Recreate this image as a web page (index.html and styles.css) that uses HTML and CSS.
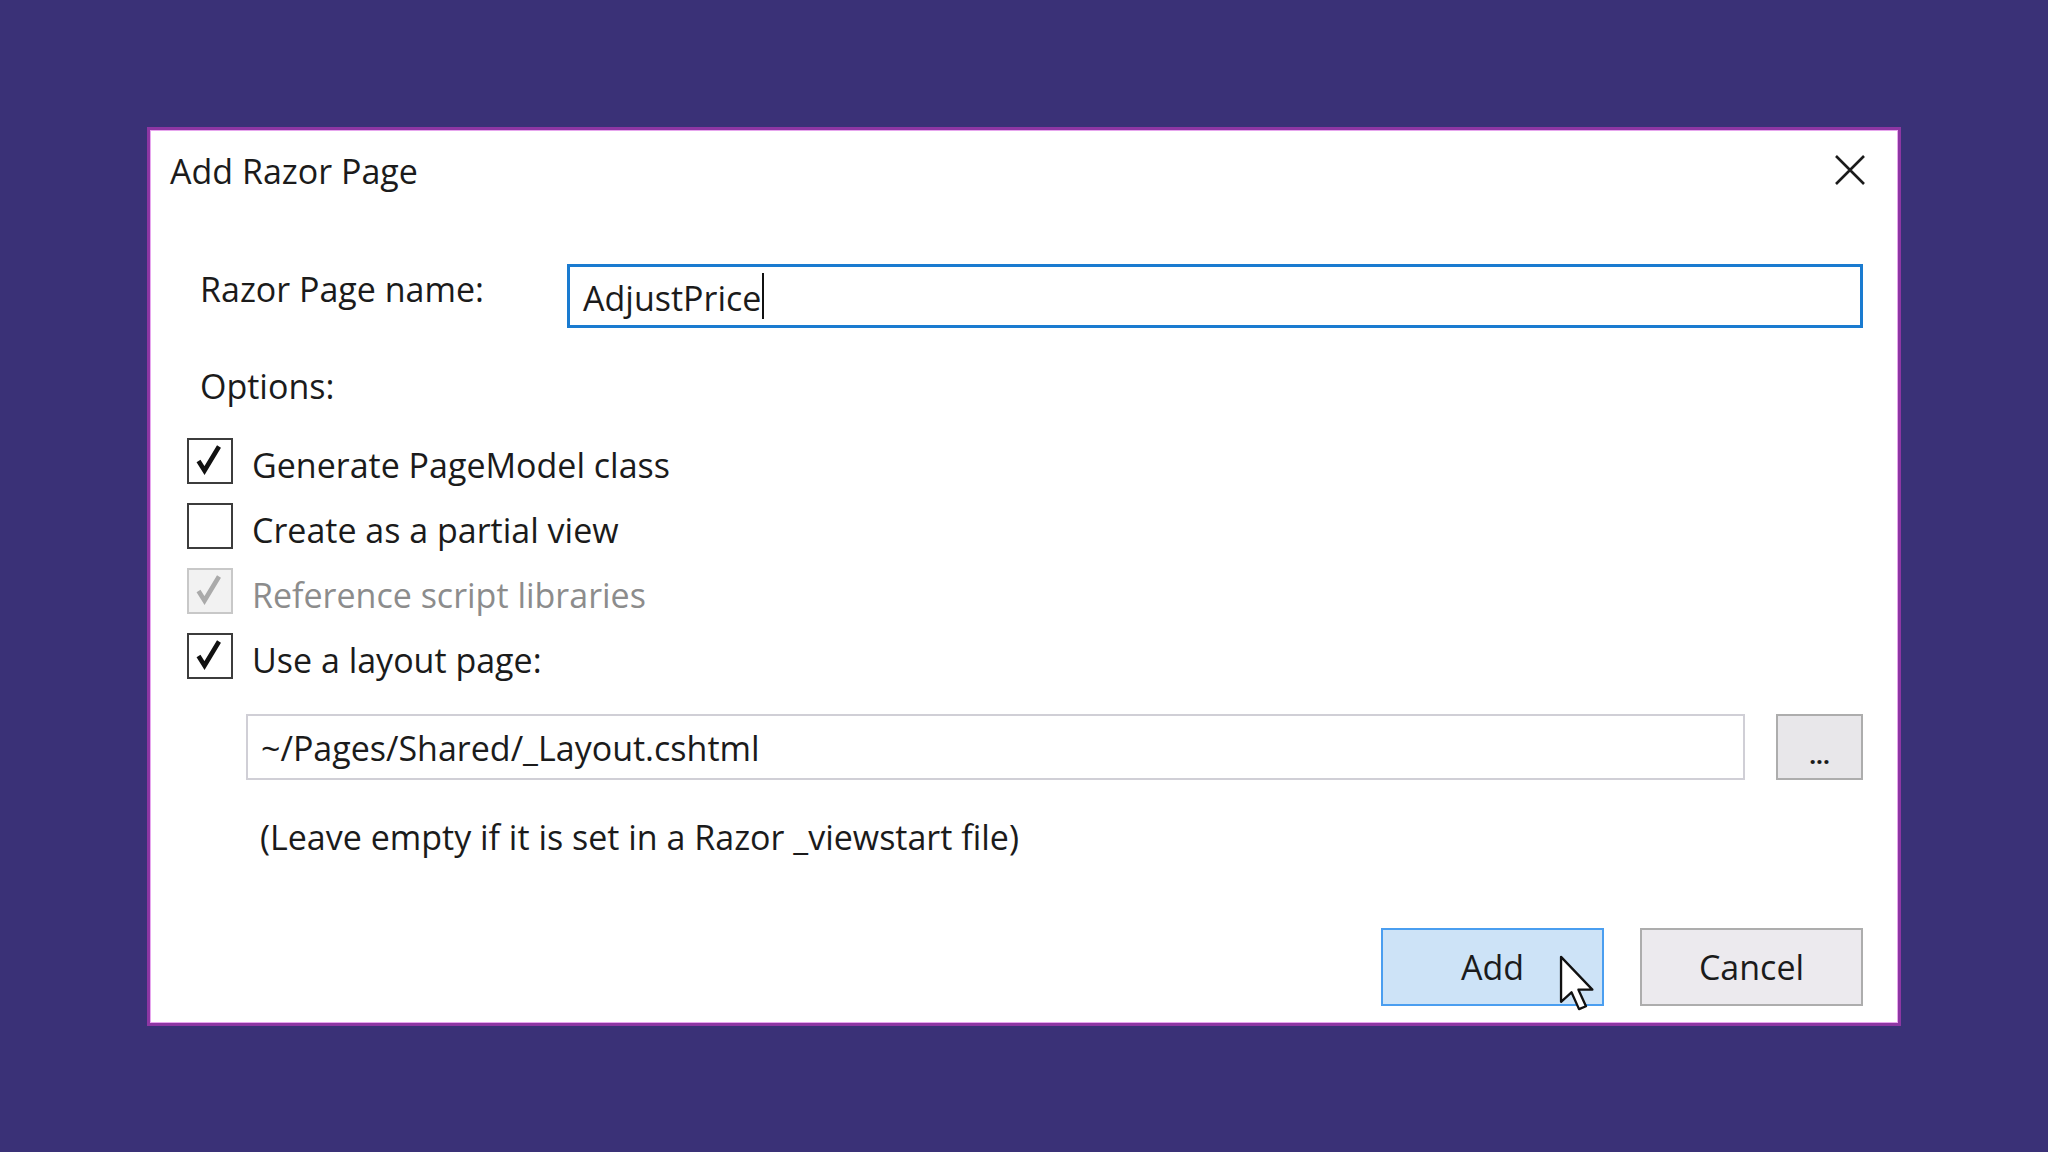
FILE: index.html
```html
<!DOCTYPE html>
<html lang="en">
<head>
    <meta charset="UTF-8">
    <title>Add Razor Page</title>
    <link rel="stylesheet" href="styles.css">
</head>
<body>
    <div class="dialog">
        <div class="titlebar">
            <span class="title">Add Razor Page</span>
            <button class="close" aria-label="Close">
                <svg width="30" height="30" viewBox="0 0 30 30"><path d="M1 1 L29 29 M29 1 L1 29" stroke="#1b1b1b" stroke-width="2.6" fill="none"/></svg>
            </button>
        </div>

        <div class="content">
            <div class="name-row">
                <label class="name-label">Razor Page name:</label>
                <div class="textbox focused"><span>AdjustPrice</span><span class="caret"></span></div>
            </div>

            <div class="options-label">Options:</div>

            <div class="checks">
                <div class="check-row">
                    <span class="box"><svg width="42" height="42" viewBox="0 0 42 42"><path d="M9.5 21 L15.5 30.5 L30 6.5" stroke="#111" stroke-width="4.6" fill="none"/></svg></span>
                    <span class="check-text">Generate PageModel class</span>
                </div>
                <div class="check-row">
                    <span class="box"></span>
                    <span class="check-text">Create as a partial view</span>
                </div>
                <div class="check-row disabled">
                    <span class="box"><svg width="42" height="42" viewBox="0 0 42 42"><path d="M9.5 21 L15.5 30.5 L30 6.5" stroke="#aaa" stroke-width="4.6" fill="none"/></svg></span>
                    <span class="check-text">Reference script libraries</span>
                </div>
                <div class="check-row">
                    <span class="box"><svg width="42" height="42" viewBox="0 0 42 42"><path d="M9.5 21 L15.5 30.5 L30 6.5" stroke="#111" stroke-width="4.6" fill="none"/></svg></span>
                    <span class="check-text">Use a layout page:</span>
                </div>
            </div>

            <div class="layout-row">
                <div class="textbox layout">~/Pages/Shared/_Layout.cshtml</div>
                <button class="browse">...</button>
            </div>

            <div class="hint">(Leave empty if it is set in a Razor _viewstart file)</div>

            <div class="actions">
                <button class="btn primary">Add
                    <svg class="cursor" width="38" height="58" viewBox="0 0 13 20"><path d="M1 1 V16.5 L4.6 13.2 L7.2 19 L9.6 18 L7 12.3 H11.8 Z" fill="#fff" stroke="#111" stroke-width="0.8" stroke-linejoin="round"/></svg>
                </button>
                <button class="btn">Cancel</button>
            </div>
        </div>
    </div>
</body>
</html>
```

FILE: styles.css
```css
body {
    margin: 0;
    padding: 127px 0 0 147px;
    background-color: #3a3177;
    font-family: "Open Sans", "Noto Sans", sans-serif;
    color: #1b1b1b;
    height: 1152px;
    box-sizing: border-box;
    overflow: hidden;
}

.dialog {
    width: 1754px;
    height: 899px;
    box-sizing: border-box;
    background: #fff;
    border: 3px solid #8d36a3;
    box-shadow: inset 0 0 0 1px #e7a6ee;
    display: flex;
    flex-direction: column;
}

.titlebar {
    height: 82px;
    display: flex;
    align-items: center;
    justify-content: space-between;
    padding: 0 33px 0 20px;
}

.title {
    font-size: 34px;
}

.close {
    border: none;
    background: none;
    padding: 0;
    width: 30px;
    height: 30px;
    margin-top: -2px;
}

.content {
    flex: 1;
    display: flex;
    flex-direction: column;
    padding: 0 35px 17px 37px;
    font-size: 34px;
}

.name-row {
    display: flex;
    align-items: flex-start;
    margin-top: 52px;
}

.name-label {
    width: 380px;
    padding: 3px 0 0 13px;
    box-sizing: border-box;
    line-height: 44px;
}

.textbox {
    flex: 1;
    height: 64px;
    box-sizing: border-box;
    display: flex;
    align-items: center;
}

.textbox.focused {
    border: 3px solid #1a7bd0;
    padding: 4px 0 0 13px;
}

.caret {
    display: inline-block;
    width: 2px;
    height: 46px;
    background: #111;
    margin-left: 1px;
    margin-top: -4px;
}

.options-label {
    margin: 36px 0 0 13px;
    line-height: 44px;
}

.checks {
    display: flex;
    flex-direction: column;
    gap: 19px;
    margin-top: 30px;
}

.check-row {
    display: flex;
    align-items: center;
    gap: 19px;
    height: 46px;
}

.check-text {
    padding-top: 8px;
}

.box {
    width: 46px;
    height: 46px;
    box-sizing: border-box;
    border: 2px solid #3c3c3c;
    background: #fff;
    display: flex;
}

.check-row.disabled {
    color: #8c8c8c;
}

.check-row.disabled .box {
    border-color: #c8c8c8;
    background: #f2f2f2;
}

.layout-row {
    display: flex;
    gap: 31px;
    margin: 35px 0 0 59px;
    height: 66px;
}

.textbox.layout {
    border: 2px solid #d0cfd6;
    padding: 2px 0 0 13px;
    height: 66px;
}

.browse {
    width: 87px;
    height: 66px;
    border: 2px solid #adadad;
    background: #e8e7ea;
    font-family: inherit;
    font-size: 24px;
    font-weight: bold;
    padding: 14px 0 0;
    color: #1b1b1b;
}

.hint {
    margin: 35px 0 0 73px;
    line-height: 44px;
}

.actions {
    margin-top: auto;
    display: flex;
    justify-content: flex-end;
    gap: 36px;
}

.btn {
    position: relative;
    width: 223px;
    height: 78px;
    box-sizing: border-box;
    border: 2px solid #adadad;
    background: #eceaee;
    font-family: inherit;
    font-size: 34px;
    color: #1b1b1b;
    padding: 0;
}

.btn.primary {
    border-color: #4a9ef0;
    background: #cde3f7;
}

.cursor {
    position: absolute;
    left: 175px;
    top: 24px;
}
```
